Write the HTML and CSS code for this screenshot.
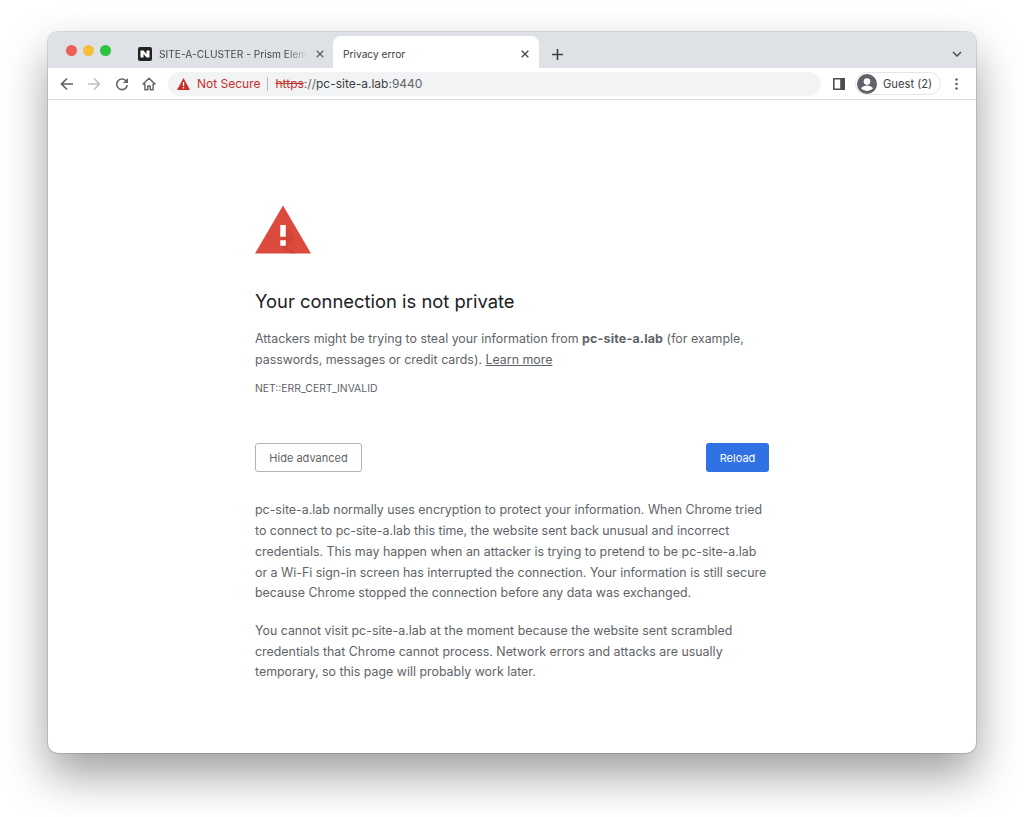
FILE: index.html
```html
<!DOCTYPE html>
<html lang="en">
<head>
    <meta charset="UTF-8">
    <meta name="viewport" content="width=device-width, initial-scale=1.0">
    <title>Privacy error</title>
    <link rel="stylesheet" href="styles.css">
</head>
<body>
    <div class="window">
        <!-- Tabs -->
        <div class="tabstrip">
            <div class="lights">
                <span class="light red"></span>
                <span class="light yellow"></span>
                <span class="light green"></span>
            </div>
            <div class="tab">
                <svg class="favicon" width="14" height="14" viewBox="0 0 14 14">
                    <rect width="14" height="14" rx="2" fill="#222"/>
                    <path d="M2.500 3.500h3l3 3.600V3.500h3v7h-3l-3-3.600v3.600h-3z" fill="#fff"/>
                </svg>
                <span class="tab-title">SITE-A-CLUSTER - Prism Element</span>
                <svg class="tab-close" width="8" height="8" viewBox="0 0 8 8"><path d="M.7.7l6.600 6.600M7.300.7L.7 7.300" stroke="#5f6368" stroke-width="1.300"/></svg>
            </div>
            <div class="tab active">
                <span class="tab-title">Privacy error</span>
                <svg class="tab-close" width="8" height="8" viewBox="0 0 8 8"><path d="M.7.7l6.600 6.600M7.300.7L.7 7.300" stroke="#45494e" stroke-width="1.300"/></svg>
            </div>
            <svg class="new-tab" width="11" height="11" viewBox="0 0 11 11"><path d="M5.500 0v11M0 5.500h11" stroke="#3c4043" stroke-width="1.600"/></svg>
            <svg class="tab-menu" width="10" height="6" viewBox="0 0 10 6"><path d="M1 1l4 4 4-4" fill="none" stroke="#4a4d51" stroke-width="1.500"/></svg>
        </div>

        <!-- Toolbar -->
        <div class="toolbar">
            <svg class="tool" width="14" height="14" viewBox="0 0 14 14"><path d="M13 7H2M7 1.500L1.500 7 7 12.500" fill="none" stroke="#5f6368" stroke-width="1.700"/></svg>
            <svg class="tool" width="14" height="14" viewBox="0 0 14 14"><path d="M1 7h11M7 1.500L12.500 7 7 12.500" fill="none" stroke="#bdc1c6" stroke-width="1.700"/></svg>
            <svg class="tool" width="14" height="14" viewBox="0 0 14 14"><path d="M11.600 4.600A5.300 5.300 0 1 0 12.300 8" fill="none" stroke="#5f6368" stroke-width="1.600"/><path d="M13 1v5H8z" fill="#5f6368"/></svg>
            <svg class="tool" width="14" height="14" viewBox="0 0 14 14"><path d="M7 1.200L1 7h1.900v5.800h2.900V9h2.400v3.800h2.900V7H13z" fill="none" stroke="#5f6368" stroke-width="1.400" stroke-linejoin="round"/></svg>
            <div class="omnibox">
                <svg class="warn" width="13" height="12" viewBox="0 0 13 12"><path d="M6.500 0L13 12H0z" fill="#c5302a"/><path d="M5.800 4h1.400v4H5.800zM5.800 9h1.400v1.400H5.800z" fill="#fff"/></svg>
                <span class="not-secure">Not Secure</span>
                <span class="url"><s class="scheme">https</s>://<span class="host">pc-site-a.lab</span>:9440</span>
            </div>
            <svg class="side-panel" width="12" height="12" viewBox="0 0 12 12"><path d="M0 0h12v12H0z" fill="#4a4d51"/><path d="M1.600 1.600h5.600v8.800H1.600z" fill="#fff"/></svg>
            <div class="profile">
                <svg width="20" height="20" viewBox="0 0 20 20"><circle cx="10" cy="10" r="10" fill="#5f6368"/><circle cx="10" cy="7.600" r="3.300" fill="#fff"/><path d="M3.900 14.300c1.500-2 3.800-2.900 6.100-2.900s4.600.9 6.100 2.900a8 8 0 0 1-12.200 0z" fill="#fff"/></svg>
                <span>Guest (2)</span>
            </div>
            <svg class="dots" width="3" height="12" viewBox="0 0 3 12"><circle cx="1.500" cy="1.500" r="1.300" fill="#5f6368"/><circle cx="1.500" cy="6" r="1.300" fill="#5f6368"/><circle cx="1.500" cy="10.500" r="1.300" fill="#5f6368"/></svg>
        </div>

        <!-- Interstitial -->
        <div class="page">
            <div class="content">
                <svg class="alert" width="57" height="49" viewBox="0 0 57 49">
                    <path d="M28.500 0L57 49H0z" fill="#db4a3d"/>
                    <path d="M30.800 20L41 34 33 41l9 8H36L26 41z" fill="#b93a2c" opacity=".3"/>
                    <path d="M25.700 20h5.600v12h-5.600zM25.700 35.500h5.600V41h-5.600z" fill="#fff"/>
                </svg>
                <h1>Your connection is not private</h1>
                <p class="lead">Attackers might be trying to steal your information from <b>pc-site-a.lab</b> (for example, passwords, messages or credit cards). <a href="#">Learn more</a></p>
                <div class="error-code">NET::ERR_CERT_INVALID</div>
                <div class="buttons">
                    <button class="btn-outline">Hide advanced</button>
                    <button class="btn-primary">Reload</button>
                </div>
                <p class="details">pc-site-a.lab normally uses encryption to protect your information. When Chrome tried to connect to pc-site-a.lab this time, the website sent back unusual and incorrect credentials. This may happen when an attacker is trying to pretend to be pc-site-a.lab or a Wi-Fi sign-in screen has interrupted the connection. Your information is still secure because Chrome stopped the connection before any data was exchanged.</p>
                <p class="details">You cannot visit pc-site-a.lab at the moment because the website sent scrambled credentials that Chrome cannot process. Network errors and attacks are usually temporary, so this page will probably work later.</p>
            </div>
        </div>
    </div>
</body>
</html>
```

FILE: styles.css
```css
html, body {
    height: 100%;
}
body {
    margin: 0;
    padding: 32px 48px 0;
    box-sizing: border-box;
    background: #fff;
    font-family: Inter, "Liberation Sans", sans-serif;
    overflow: hidden;
}
.window {
    height: 721px;
    display: flex;
    flex-direction: column;
    background: #fff;
    border-radius: 10px;
    overflow: hidden;
    box-shadow: 0 0 0 1px rgba(0, 0, 0, .12), 0 22px 45px rgba(0, 0, 0, .38);
}

/* tabs */
.tabstrip {
    height: 36px;
    flex: none;
    display: flex;
    align-items: center;
    background: #dee1e6;
}
.lights {
    display: flex;
    gap: 6px;
    padding-left: 18px;
    width: 72px;
    box-sizing: border-box;
}
.light {
    width: 11px;
    height: 11px;
    border-radius: 50%;
}
.red { background: #ed5f57; }
.yellow { background: #f6bd3b; }
.green { background: #29c440; }
.tab {
    width: 213px;
    height: 100%;
    display: flex;
    align-items: center;
    padding: 0 9px 0 18px;
    box-sizing: border-box;
    font-size: 10.200px;
    color: #45494e;
    margin-top: 8px;
}
.favicon {
    flex: none;
    margin-right: 7px;
}
.tab-title {
    flex: 1;
    margin-right: 8px;
    overflow: hidden;
    white-space: nowrap;
    -webkit-mask-image: linear-gradient(to right, #000 85%, transparent);
    mask-image: linear-gradient(to right, #000 85%, transparent);
}
.tab.active {
    width: 206px;
    padding: 0 10px;
    background: #fff;
    color: #3c4043;
    border-radius: 8px 8px 0 0;
}
.tab.active .tab-title {
    -webkit-mask-image: none;
    mask-image: none;
}
.tab-close {
    flex: none;
}
.new-tab {
    margin: 8px 0 0 13px;
}
.tab-menu {
    margin: 8px 14px 0 auto;
}

/* toolbar */
.toolbar {
    height: 31px;
    flex: none;
    display: flex;
    align-items: center;
    padding-left: 12px;
    background: #fff;
    border-bottom: 1px solid #dadce0;
}
.tool {
    flex: none;
    margin-right: 13.300px;
}
.omnibox {
    flex: none;
    width: 653px;
    height: 24px;
    margin-left: -1.200px;
    padding-left: 9px;
    box-sizing: border-box;
    display: flex;
    align-items: center;
    background: #f1f3f4;
    border-radius: 12px;
    font-size: 12px;
    white-space: nowrap;
}
.warn {
    flex: none;
    margin-right: 7px;
}
.not-secure {
    color: #c5302a;
    padding-right: 6px;
    margin-right: 8px;
    border-right: 1px solid #b6b9bd;
    line-height: 14px;
}
.url {
    color: #5f6368;
}
.scheme {
    color: #c5302a;
}
.host {
    color: #3c4043;
}
.side-panel {
    flex: none;
    margin-left: 12px;
}
.profile {
    flex: none;
    width: 86px;
    height: 23px;
    margin-left: 10px;
    box-sizing: border-box;
    display: flex;
    align-items: center;
    gap: 6px;
    padding-left: 1px;
    border: 1px solid #e3e5e8;
    border-radius: 12px;
    font-size: 11.200px;
    color: #3c4043;
    white-space: nowrap;
}
.dots {
    flex: none;
    margin-left: 14px;
}

/* page */
.page {
    flex: 1;
    padding: 105px 0 0 207px;
}
.content {
    width: 514px;
    color: #5f6368;
    font-size: 12.400px;
    line-height: 20.700px;
}
.alert {
    display: block;
    width: 56px;
}
h1 {
    margin: 34px 0 0;
    font-size: 18.400px;
    font-weight: 400;
    line-height: 26px;
    color: #202124;
}
.lead {
    margin: 15px 0 0;
}
.lead b {
    font-weight: 700;
    letter-spacing: .2px;
}
.lead a {
    color: #5f6368;
}
.error-code {
    margin-top: 9px;
    font-size: 10.400px;
    line-height: 20px;
    color: #5f6368;
}
.buttons {
    display: flex;
    justify-content: space-between;
    margin-top: 44px;
}
button {
    font-family: inherit;
    font-size: 11px;
    height: 29px;
    border-radius: 3px;
    cursor: pointer;
}
.btn-outline {
    width: 107px;
    background: #fff;
    color: #5f6368;
    border: 1px solid #b0b3b8;
}
.btn-primary {
    width: 63px;
    background: #3072e4;
    color: #fff;
    border: none;
}
.details {
    margin: 0;
}
.buttons + .details {
    margin-top: 28px;
}
.details + .details {
    margin-top: 17px;
}
```
